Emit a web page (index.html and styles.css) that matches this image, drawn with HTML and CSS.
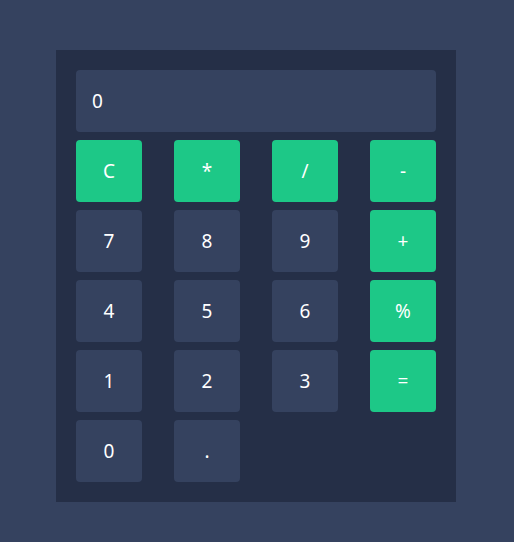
FILE: index.html
```html
<!DOCTYPE html>
<html>
<head>
<meta charset="utf-8">
<link rel="stylesheet" href="styles.css">
</head>
<body>
<div class="calc">
  <div class="display">0</div>
  <div class="keys">
    <button class="key op">C</button>
    <button class="key op">*</button>
    <button class="key op">/</button>
    <button class="key op">-</button>
    <button class="key">7</button>
    <button class="key">8</button>
    <button class="key">9</button>
    <button class="key op">+</button>
    <button class="key">4</button>
    <button class="key">5</button>
    <button class="key">6</button>
    <button class="key op">%</button>
    <button class="key">1</button>
    <button class="key">2</button>
    <button class="key">3</button>
    <button class="key op">=</button>
    <button class="key">0</button>
    <button class="key">.</button>
  </div>
</div>
</body>
</html>
```
FILE: styles.css
```css
html, body {
  margin: 0;
  background: #35425f;
}
body {
  padding: 50px 56px;
  font-family: "Noto Sans", "Open Sans", sans-serif;
}
.calc {
  width: 400px;
  box-sizing: border-box;
  padding: 20px;
  background: #252f47;
}
.display {
  height: 62px;
  box-sizing: border-box;
  padding: 0 16px;
  display: flex;
  align-items: center;
  background: #35425f;
  border-radius: 4px;
  color: #ffffff;
  font-size: 19px;
  margin-bottom: 8px;
}
.keys {
  display: grid;
  grid-template-columns: repeat(4, 66px);
  grid-auto-rows: 62px;
  column-gap: 32px;
  row-gap: 8px;
}
.key {
  border: none;
  margin: 0;
  padding: 0;
  border-radius: 4px;
  background: #35425f;
  color: #ffffff;
  font-family: inherit;
  font-size: 19px;
}
.key.op {
  background: #1dc887;
}
```
